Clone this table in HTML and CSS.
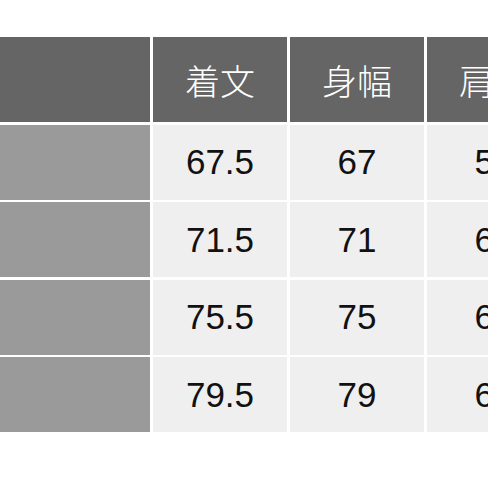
FILE: index.html
```html
<!DOCTYPE html>
<html lang="ja">
<head>
<meta charset="utf-8">
<link rel="stylesheet" href="styles.css">
</head>
<body>
<div class="sheet">
  <div class="size-table">
    <div class="cell head"></div>
    <div class="cell head">着文</div>
    <div class="cell head">身幅</div>
    <div class="cell head">肩幅</div>

    <div class="cell label"></div>
    <div class="cell val">67.5</div>
    <div class="cell val">67</div>
    <div class="cell val">52</div>

    <div class="cell label"></div>
    <div class="cell val">71.5</div>
    <div class="cell val">71</div>
    <div class="cell val">60</div>

    <div class="cell label"></div>
    <div class="cell val">75.5</div>
    <div class="cell val">75</div>
    <div class="cell val">62</div>

    <div class="cell label"></div>
    <div class="cell val">79.5</div>
    <div class="cell val">79</div>
    <div class="cell val">64</div>
  </div>
</div>
</body>
</html>
```
FILE: styles.css
```css
html, body {
  margin: 0;
  padding: 0;
  background: #ffffff;
  overflow: hidden;
}
.sheet {
  width: 488px;
  height: 488px;
  overflow: hidden;
  padding-top: 37px;
  box-sizing: border-box;
}
.size-table {
  display: grid;
  grid-template-columns: 150px 134px 134px 134px;
  grid-template-rows: 85px repeat(4, 75px);
  column-gap: 3px;
  row-gap: 2.5px;
  width: 560px;
}
.cell {
  display: flex;
  align-items: center;
  justify-content: center;
}
.head {
  background: #656565;
  color: #ffffff;
  font-family: "Noto Sans CJK JP", "Noto Sans", sans-serif;
  font-weight: 300;
  font-size: 35px;
  letter-spacing: 0;
}
.label {
  background: #9a9a9a;
}
.val {
  background: #efefef;
  color: #111111;
  font-family: "Liberation Sans", Arial, sans-serif;
  font-size: 35px;
}
```
